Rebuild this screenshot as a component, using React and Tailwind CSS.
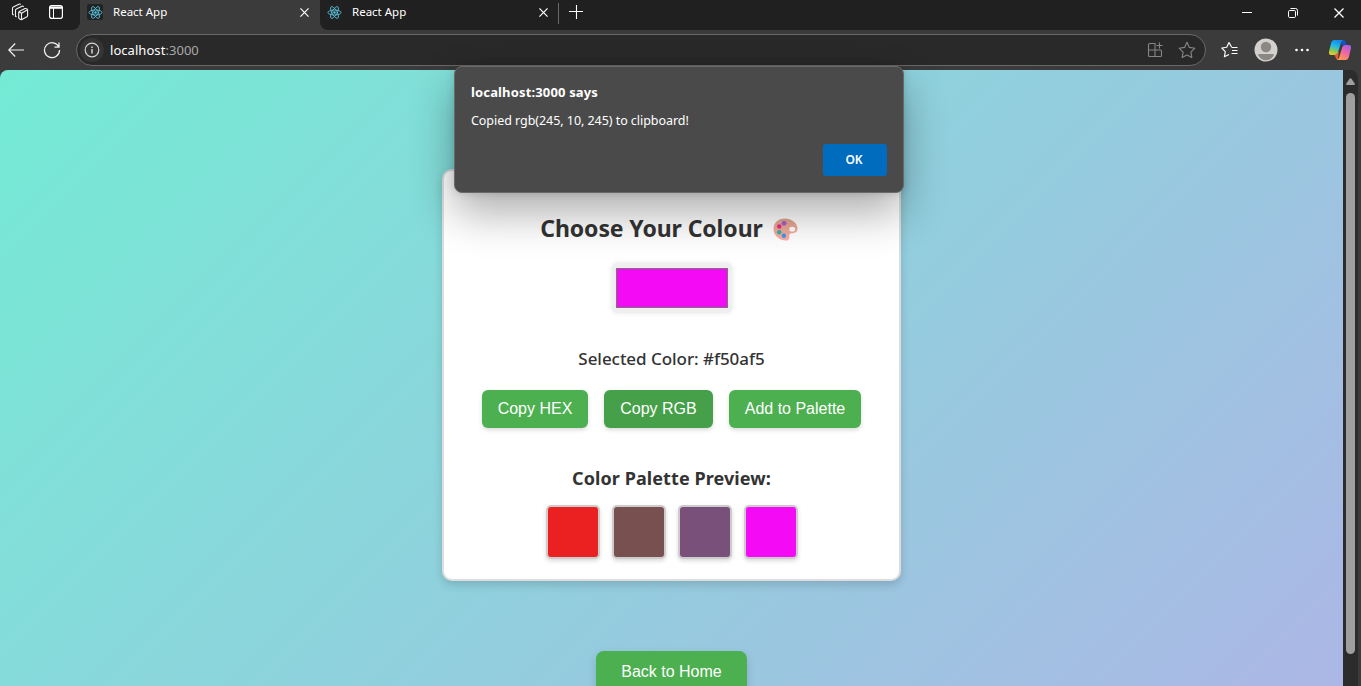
import React from "react";

const ui = "font-['Noto_Sans','Open_Sans',sans-serif]";

function ReactMark() {
  return (
    <span className="flex h-4 w-4 shrink-0 items-center justify-center rounded-[2px] bg-[#222]">
      <svg width="15" height="15" viewBox="0 0 16 16" fill="none" stroke="#58c4dc" strokeWidth="0.9">
        <ellipse cx="8" cy="8" rx="7" ry="2.7" />
        <ellipse cx="8" cy="8" rx="7" ry="2.7" transform="rotate(60 8 8)" />
        <ellipse cx="8" cy="8" rx="7" ry="2.7" transform="rotate(120 8 8)" />
        <circle cx="8" cy="8" r="1.3" fill="#58c4dc" stroke="none" />
      </svg>
    </span>
  );
}

function Cross({ size = 9 }) {
  return (
    <svg width={size} height={size} viewBox="0 0 10 10" stroke="#fff" strokeWidth="1.3" className="shrink-0">
      <path d="M.5.5l9 9M9.5.5l-9 9" />
    </svg>
  );
}

function TabBar() {
  return (
    <div className="flex h-[30px] bg-[#202020]">
      <div className="flex w-20 shrink-0 bg-[#3b3b3b]">
        <div className="flex w-20 rounded-br-lg bg-[#202020] pl-[11px]">
          <svg width="18" height="18" viewBox="0 0 18 18" className="mt-[3px]" fill="none" stroke="#f2f2f2" strokeWidth="1.1" strokeLinejoin="round" strokeLinecap="round">
            <path d="M8.600 8.200L14 5.600q1-.4 1.700.2l.3.200q.6.400.6 1.200v5.300q0 .7-.7 1.200l-5 2.700q-.8.4-1.400 0l-1.100-.6q-.7-.4-.7-1.200V9.500q0-.9.900-1.300zM8.200 9l2.300 1.200v6" />
            <path d="M10.500 10.200L16 7" />
            <path d="M5.300 13.800l-.8-.4V7.300q0-.8.800-1.200l5.700-2.800q.9-.4 1.500.1" />
            <path d="M2.400 11.800l-.9-.5V5.200q0-.8.800-1.200L7.800 1.200q.8-.4 1.500.1" />
          </svg>
          <svg width="14" height="14" viewBox="0 0 14 14" className="mt-[5px] ml-5" fill="none" stroke="#fff">
            <rect x=".6" y=".6" width="12.8" height="12.8" rx="2.200" strokeWidth="1.2" />
            <path d="M1 1.500h12v2.300H1z" fill="#fff" stroke="none" />
            <path d="M4.500 3v10" strokeWidth="1" />
          </svg>
        </div>
      </div>
      <div className="flex w-60 shrink-0 bg-[#3b3b3b] pt-1 pl-[7px]">
        <ReactMark />
        <span className={`${ui} ml-[10px] w-[187px] text-[11.5px] leading-4 tracking-[0px] text-white`}>React App</span>
        <div className="pt-1"><Cross /></div>
      </div>
      <div className="flex bg-[#3b3b3b]">
        <div className="flex w-[238px] rounded-bl-lg bg-[#202020] pt-1 pl-[6px]">
          <ReactMark />
          <span className={`${ui} ml-[10px] w-[187px] text-[11.5px] leading-4 tracking-[0px] text-white`}>React App</span>
          <div className="pt-1"><Cross /></div>
        </div>
      </div>
      <div className="mt-[3px] h-[21px] w-px bg-[#686868]" />
      <svg width="14" height="14" viewBox="0 0 14 14" className="mt-[5px] ml-[10px]" stroke="#fff" strokeWidth="1.1">
        <path d="M7.500 0v14M0 6.500h14" />
      </svg>
      <div className="ml-auto flex pr-[17px]">
        <div className="mt-3 h-px w-[10px] bg-white" />
        <svg width="10" height="10" viewBox="0 0 10 10" className="mt-2 ml-9" fill="none" stroke="#fff">
          <rect x=".5" y="2.500" width="7" height="7" rx="1.200" />
          <path d="M2.500.5H7.500Q9.500.5 9.500 2.500V7.500" />
        </svg>
        <div className="mt-2 ml-9"><Cross size={10} /></div>
      </div>
    </div>
  );
}

const star = "M8 1.200l2.100 4.500 4.900.7-3.550 3.450.85 4.900L8 12.400l-4.300 2.350.85-4.900L1 6.400l4.900-.7z";

function CopilotMark() {
  return (
    <svg width="24" height="22" viewBox="0 0 24 22" className="ml-[18px]">
      <defs>
        <linearGradient id="cool" x1="0.500" y1="0" x2="0.200" y2="1">
          <stop offset="0" stopColor="#1989e8" />
          <stop offset=".4" stopColor="#20bce8" />
          <stop offset=".7" stopColor="#85c75c" />
          <stop offset="1" stopColor="#f5cc25" />
        </linearGradient>
        <linearGradient id="warm" x1="0.800" y1="0" x2="0.300" y2="1">
          <stop offset="0" stopColor="#a65ce8" />
          <stop offset=".5" stopColor="#f0679f" />
          <stop offset="1" stopColor="#ff9b4c" />
        </linearGradient>
      </defs>
      <path d="M12 1h3.500q1.800 0 2.300 2l1 3.500H14z" fill="#1b50bd" />
      <path d="M6 1h9q-1.600 1-2.200 3l-2.600 8.800Q9.300 16 6.500 16H3.200Q.2 16 1.200 12L3 4.500Q3.800 1 6 1z" fill="url(#cool)" />
      <path d="M6.500 16q2.700 0 3.600-3l.7 0-1 8q-1.500-.3-2-2.200z" fill="#ed5b31" />
      <path d="M17.500 6h3.300q3 0 2 4L21 17.500Q20.200 21 17.500 21H9q1.700-1 2.300-3L14 9q.9-3 3.500-3z" fill="url(#warm)" />
    </svg>
  );
}

function AddressBar() {
  return (
    <div className="flex h-10 items-center bg-[#3b3b3b] pl-2">
      <svg width="16" height="14" viewBox="0 0 16 14" fill="none" stroke="#f2f2f2" strokeWidth="1.150">
        <path d="M7.200.5L.8 7l6.400 6.500M.8 7H16" />
      </svg>
      <svg width="18" height="18" viewBox="0 0 18 18" className="ml-[19px]" fill="none" stroke="#f2f2f2" strokeWidth="1.250">
        <path d="M15.800 6A7.500 7.500 0 1 0 16.500 9M16 1.500V6H11.500" />
      </svg>
      <div className="ml-[15px] flex h-8 w-[1130px] items-center rounded-full border border-[#686868] bg-[#292929] pl-[3px]">
        <span className="flex h-6 w-6 items-center justify-center rounded-full bg-[#353535]">
          <svg width="16" height="16" viewBox="0 0 16 16" fill="none" stroke="#d5d5d5" strokeWidth="1.200">
            <circle cx="8" cy="8" r="6.800" />
            <path d="M8 7v4.500M8 4.500v1.500" strokeWidth="1.500" />
          </svg>
        </span>
        <span className={`${ui} ml-[6px] text-[13px] leading-5 tracking-[0.05px] text-white`}>localhost<span className="text-[#a8a8a8]">:3000</span></span>
        <svg width="16" height="16" viewBox="0 0 16 16" className="ml-auto" fill="none" stroke="#858585" strokeWidth="1.100">
          <path d="M8.500 1.500H2.500Q1.500 1.500 1.500 2.500v11q0 1 1 1h11q1 0 1-1V9q0-1-1-1H1.500M8 1.500v13M12.500.5v6M9.500 3.500h6" />
        </svg>
        <svg width="18" height="18" viewBox="0 0 16 16" className="mr-[9px] ml-[15px]" fill="none" stroke="#858585" strokeWidth="1" strokeLinejoin="round"><path d={star} /></svg>
      </div>
      <svg width="18" height="18" viewBox="0 0 18 18" className="ml-[15px]" fill="none" stroke="#fff" strokeWidth="1.150" strokeLinejoin="round">
        <path d="M10.500 6L8 1.500 5.700 6.200.8 7l3.500 3.600-.9 5.200L8 13.400M10.500 6.500h6M11 9.500h5.500M10.500 12.500h6" />
      </svg>
      <svg width="24" height="24" viewBox="0 0 24 24" className="ml-[15px]">
        <circle cx="12" cy="12" r="11.500" fill="#d3d1ce" />
        <circle cx="12" cy="9" r="5.200" fill="#8a8785" />
        <path d="M4 17q0-1 1.200-1h13.600Q20 16 20 17q-3 5.300-8 5.300T4 17z" fill="#8a8785" />
      </svg>
      <svg width="16" height="4" viewBox="0 0 16 4" className="ml-4" fill="#fff">
        <circle cx="2.500" cy="2" r="1.300" /><circle cx="8" cy="2" r="1.300" /><circle cx="13.500" cy="2" r="1.300" />
      </svg>
      <CopilotMark />
    </div>
  );
}

function PaletteIcon() {
  return (
    <svg width="25" height="23" viewBox="0 0 26 24" className="mt-[2px] mr-[5px] ml-[10px]">
      <defs>
        <linearGradient id="wood" x1="0" y1="0" x2="0" y2="1">
          <stop offset="0" stopColor="#dda58a" /><stop offset="1" stopColor="#ffb0a8" />
        </linearGradient>
      </defs>
      <path fillRule="evenodd" fill="url(#wood)" d="M12.500.5C19 .5 25.500 5 25.500 11c0 4-3 5-6 5-2.300 0-2.500 1-2.500 3 0 2.500-.4 4.500-3.500 4.500C7 23.500.5 18.500.5 11.500.5 5 5 .5 12.500.5z" />
      <ellipse cx="20" cy="11.700" rx="3" ry="2.500" fill="#fff" />
      <circle cx="11.500" cy="5.500" r="2.500" fill="#a95bd0" />
      <circle cx="6.500" cy="8.800" r="2.300" fill="#ed2c82" />
      <circle cx="6.500" cy="14.800" r="2.300" fill="#30b5ac" />
      <circle cx="11.300" cy="18.500" r="2.300" fill="#4496f0" />
    </svg>
  );
}

const button = "h-[38px] rounded-[6px] pb-px text-center font-['Liberation_Sans',sans-serif] text-base leading-9 text-white shadow-[0_2px_4px_rgba(0,0,0,0.15)]";

function ColorCard() {
  return (
    <section className="flex h-[412px] w-[459px] shrink-0 flex-col items-center rounded-[10px] border-2 border-[#ddd] bg-white text-[#333] shadow-[0_4px_10px_rgba(0,0,0,0.15)]">
      <h1 className={`${ui} mt-[41px] flex h-8 items-center text-[23px] font-bold whitespace-nowrap`}>
        <span className="tracking-[-0.1px]">Choose Your Colour</span><PaletteIcon />
      </h1>
      <div className="mt-[19px] h-[50px] w-[120px] rounded-[5px] bg-[#efefef] px-1 py-[5px] shadow-[0_0_5px_rgba(0,0,0,0.1)]">
        <div className="h-10 w-28 border border-[#777] bg-[#f50af5]" />
      </div>
      <p className={`${ui} mt-[34px] h-6 text-[17px] leading-6 font-medium tracking-[-0.05px] whitespace-nowrap`}>Selected Color: #f50af5</p>
      <div className="mt-[19px] flex gap-4">
        <button className={`${button} w-[106px] bg-[#4caf50]`}>Copy HEX</button>
        <button className={`${button} w-[109px] bg-[#45a049]`}>Copy RGB</button>
        <button className={`${button} w-[132px] bg-[#4caf50]`}>Add to Palette</button>
      </div>
      <h2 className={`${ui} mt-[38px] h-6 text-[18px] leading-6 font-bold tracking-[0.08px] whitespace-nowrap`}>Color Palette Preview:</h2>
      <div className="mt-[15px] flex gap-3">
        {["bg-[#eb2121]", "bg-[#78504f]", "bg-[#785079]", "bg-[#f50af5]"].map((c) => (
          <div key={c} className={`${c} h-[54px] w-[54px] rounded-[5px] border-2 border-[#ccc] shadow-[0_2px_4px_rgba(0,0,0,0.15)]`} />
        ))}
      </div>
    </section>
  );
}

function AlertDialog() {
  return (
    <div role="alertdialog" className={`${ui} absolute top-[66px] left-[454px] flex h-[127px] w-[450px] flex-col rounded-lg border border-[#6a6a6a] bg-[#4a4a4a] px-4 pt-4 text-white shadow-[0_20px_44px_rgba(0,0,0,0.32),0_0_8px_rgba(0,0,0,0.15)]`}>
      <strong className="h-[18px] text-[13px] leading-[18px] font-bold tracking-[0.15px] whitespace-nowrap">localhost:3000 says</strong>
      <p className="mt-[11px] h-[18px] text-[12.5px] leading-[18px] tracking-[-0.05px] whitespace-nowrap">Copied rgb(245, 10, 245) to clipboard!</p>
      <button className="mt-[14px] h-8 w-16 self-end rounded-[3px] bg-[#006cbe] pr-[2px] pb-px text-[12px] leading-[31px] font-semibold">OK</button>
    </div>
  );
}

export default function App() {
  return (
    <div className="relative flex h-[686px] w-[1361px] flex-col overflow-hidden bg-[#3b3b3b]">
      <TabBar />
      <AddressBar />
      <div className="flex h-[616px] items-start overflow-hidden rounded-tl-lg">
        <main className="flex h-[632px] w-[1343px] flex-col items-center overflow-hidden bg-[linear-gradient(135deg,#74ebd5,#acb6e5)] pt-[99px]">
          <ColorCard />
          <button className="mt-[70px] h-[43px] w-[151px] shrink-0 rounded-lg bg-[#4caf50] pb-px text-center font-['Liberation_Sans',sans-serif] text-base leading-10 text-white shadow-[0_4px_10px_rgba(0,0,0,0.15)]">Back to Home</button>
        </main>
        <div className="flex h-[616px] w-[15px] flex-col items-center rounded-tr-lg bg-[#2c2c2c] pt-2">
          <svg width="9" height="7" viewBox="0 0 9 7"><path d="M3.500.8q1-1.200 2 0l3.200 4.700Q9.300 7 8 7H1Q-.3 7 .3 5.500z" fill="#9f9f9f" /></svg>
          <div className="mt-2 h-[561px] w-[9px] rounded-full bg-[#9f9f9f]" />
        </div>
      </div>
      <AlertDialog />
    </div>
  );
}
